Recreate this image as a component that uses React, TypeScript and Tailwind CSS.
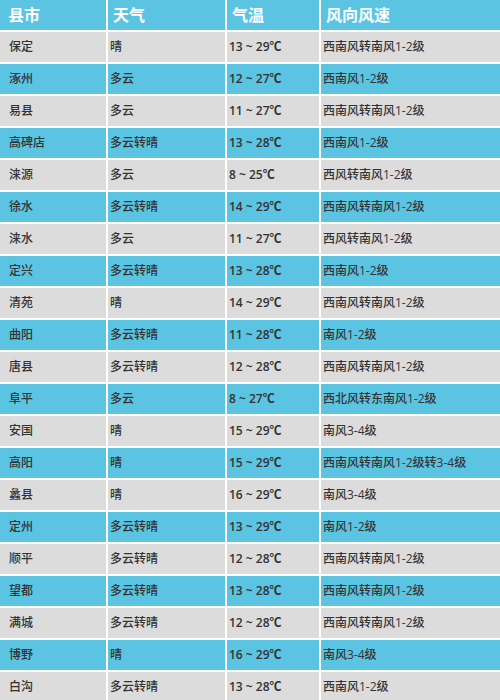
const rows: [string, string, string, string][] = [
  ["保定", "晴", "13 ~ 29℃", "西南风转南风1-2级"],
  ["涿州", "多云", "12 ~ 27℃", "西南风1-2级"],
  ["易县", "多云", "11 ~ 27℃", "西南风转南风1-2级"],
  ["高碑店", "多云转晴", "13 ~ 28℃", "西南风1-2级"],
  ["涞源", "多云", "8 ~ 25℃", "西风转南风1-2级"],
  ["徐水", "多云转晴", "14 ~ 29℃", "西南风转南风1-2级"],
  ["涞水", "多云", "11 ~ 27℃", "西风转南风1-2级"],
  ["定兴", "多云转晴", "13 ~ 28℃", "西南风1-2级"],
  ["清苑", "晴", "14 ~ 29℃", "西南风转南风1-2级"],
  ["曲阳", "多云转晴", "11 ~ 28℃", "南风1-2级"],
  ["唐县", "多云转晴", "12 ~ 28℃", "西南风转南风1-2级"],
  ["阜平", "多云", "8 ~ 27℃", "西北风转东南风1-2级"],
  ["安国", "晴", "15 ~ 29℃", "南风3-4级"],
  ["高阳", "晴", "15 ~ 29℃", "西南风转南风1-2级转3-4级"],
  ["蠡县", "晴", "16 ~ 29℃", "南风3-4级"],
  ["定州", "多云转晴", "13 ~ 29℃", "南风1-2级"],
  ["顺平", "多云转晴", "12 ~ 28℃", "西南风转南风1-2级"],
  ["望都", "多云转晴", "13 ~ 28℃", "西南风转南风1-2级"],
  ["满城", "多云转晴", "12 ~ 28℃", "西南风转南风1-2级"],
  ["博野", "晴", "16 ~ 29℃", "南风3-4级"],
  ["白沟", "多云转晴", "13 ~ 28℃", "西南风1-2级"],
];

export default function App() {
  return (
    <div
      className="w-[500px] h-[700px] overflow-hidden bg-white"
      style={{ fontFamily: '"Open Sans", "Noto Sans CJK SC", sans-serif' }}
    >
      <div className="grid grid-cols-[106px_117px_92px_1fr] gap-[2px]">
        {["县市", "天气", "气温", "风向风速"].map((h, i) => (
          <div
            key={h}
            className={`h-[30px] bg-[#5bc4e2] text-white text-[16px] font-bold flex items-center ${
              i === 0 ? "pl-2" : "pl-[5px]"
            }`}
          >
            {h}
          </div>
        ))}
        {rows.map((r, ri) =>
          r.map((c, ci) => (
            <div
              key={ri + "-" + ci}
              className={`h-[30px] flex items-center text-[12px] text-[#333] ${
                ri % 2 === 0 ? "bg-[#dcdcdc]" : "bg-[#5bc4e2]"
              } ${ci === 0 ? "pl-[9px]" : "pl-[2px]"} ${ci === 2 ? "font-semibold" : "font-medium"}`}
            >
              {c}
            </div>
          ))
        )}
      </div>
    </div>
  );
}
